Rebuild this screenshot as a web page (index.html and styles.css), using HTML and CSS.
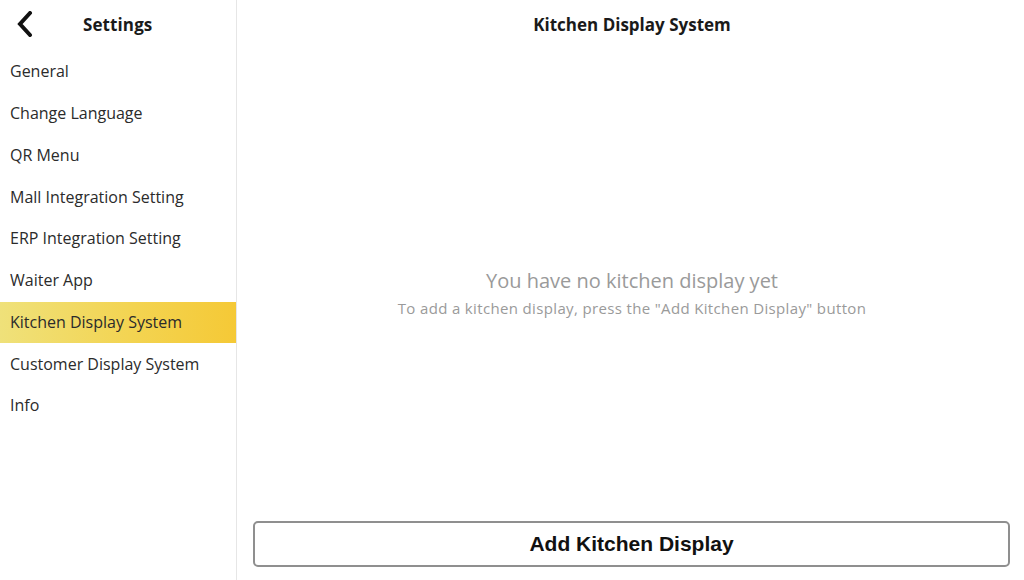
FILE: index.html
```html
<!DOCTYPE html>
<html lang="en">
<head>
<meta charset="utf-8">
<title>Settings - Kitchen Display System</title>
<link rel="stylesheet" href="styles.css">
</head>
<body>
<div class="app">
  <aside class="sidebar">
    <div class="side-header">
      <button class="back" aria-label="Back">
        <svg width="18" height="26" viewBox="0 0 18 26"><path d="M14 2 L4 13 L14 24" fill="none" stroke="#111" stroke-width="4" stroke-linecap="round" stroke-linejoin="miter"/></svg>
      </button>
      <div class="side-title">Settings</div>
    </div>
    <nav class="menu">
      <div class="item">General</div>
      <div class="item">Change Language</div>
      <div class="item">QR Menu</div>
      <div class="item">Mall Integration Setting</div>
      <div class="item">ERP Integration Setting</div>
      <div class="item">Waiter App</div>
      <div class="item active">Kitchen Display System</div>
      <div class="item">Customer Display System</div>
      <div class="item">Info</div>
    </nav>
  </aside>
  <main class="main">
    <div class="main-header">Kitchen Display System</div>
    <div class="empty">
      <div class="empty-title">You have no kitchen display yet</div>
      <div class="empty-sub">To add a kitchen display, press the "Add Kitchen Display" button</div>
    </div>
    <div class="footer">
      <button class="add-btn">Add Kitchen Display</button>
    </div>
  </main>
</div>
</body>
</html>
```
FILE: styles.css
```css
* { box-sizing: border-box; }
html, body { margin: 0; padding: 0; height: 100%; }
body {
  font-family: "Open Sans", "Noto Sans", sans-serif;
  background: #fff;
  color: #222;
}
.app {
  display: flex;
  height: 580px;
  width: 1024px;
}
.sidebar {
  width: 237px;
  flex: 0 0 237px;
  border-right: 1px solid #e6e6e6;
  display: flex;
  flex-direction: column;
}
.side-header {
  height: 51px;
  display: flex;
  align-items: center;
  padding-left: 14px;
}
.back {
  border: 0;
  background: none;
  padding: 0;
  width: 22px;
  height: 28px;
  display: flex;
  align-items: center;
  justify-content: center;
  margin-top: -4px;
}
.side-title {
  margin-left: 47px;
  margin-top: -2px;
  font-size: 17px;
  font-weight: 700;
  color: #1a1a1a;
  letter-spacing: 0.1px;
}
.menu {
  display: flex;
  flex-direction: column;
}
.item {
  height: 41.75px;
  display: flex;
  align-items: center;
  padding-left: 10px;
  padding-bottom: 1px;
  font-size: 16px;
  color: #2b2b2b;
  letter-spacing: 0;
}
.item.active {
  background: linear-gradient(90deg, #efe17a 0%, #f3d452 55%, #f5c936 100%);
}
.main {
  flex: 1;
  display: flex;
  flex-direction: column;
}
.main-header {
  height: 48px;
  display: flex;
  align-items: center;
  justify-content: center;
  font-size: 17px;
  font-weight: 700;
  color: #1a1a1a;
  padding-top: 1px;
  padding-left: 3px;
}
.empty {
  flex: 1;
  display: flex;
  flex-direction: column;
  align-items: center;
  justify-content: center;
  padding-top: 16px;
  padding-left: 3px;
  color: #9a9a9a;
}
.empty-title {
  font-size: 20px;
  line-height: 26px;
}
.empty-sub {
  font-size: 15px;
  letter-spacing: 0.35px;
  line-height: 20px;
  margin-top: 4px;
}
.footer {
  padding: 0 14px 13px 16px;
}
.add-btn {
  width: 100%;
  height: 46px;
  background: #fff;
  border: 2px solid #8f8f8f;
  border-radius: 5px;
  font-family: "Liberation Sans", Arial, sans-serif;
  font-weight: 700;
  font-size: 21px;
  color: #111;
  padding: 0;
}
```
